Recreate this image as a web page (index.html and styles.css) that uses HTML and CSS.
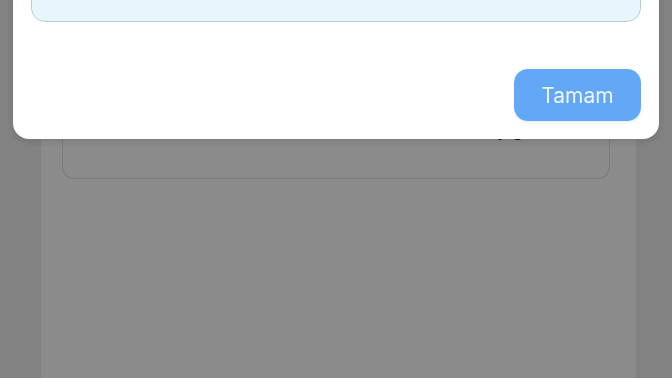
FILE: index.html
```html
<!DOCTYPE html>
<html lang="tr">
<head>
    <meta charset="UTF-8">
    <meta name="viewport" content="width=device-width, initial-scale=1.0">
    <title>Tamam</title>
    <link rel="stylesheet" href="styles.css">
</head>
<body>
    <div class="page">
        <div class="card">
            <div class="card-note">(Saygı)</div>
        </div>
    </div>

    <div class="modal">
        <div class="modal-field"></div>
        <div class="modal-footer">
            <button class="btn">Tamam</button>
        </div>
    </div>
</body>
</html>
```

FILE: styles.css
```css
body { margin: 0; background: #828282; font-family: Inter, "Noto Sans", sans-serif; height: 100vh; overflow: hidden; }
.page { margin: 0 36px 0 41px; height: 100vh; background: #8b8b8b; padding: 0 26px 0 21px; }
.card { height: 179px; border: 1px solid #7b7b7b; border-top: none; border-radius: 0 0 12px 12px; display: flex; align-items: flex-end; justify-content: flex-end; padding: 0 60px 38px 0; box-sizing: border-box; }
.card-note { font-size: 18px; color: #111; letter-spacing: 5px; }
.modal { position: fixed; left: 13px; right: 13px; top: -30px; background: white; border-radius: 0 0 16px 16px; padding: 0 18px 18px; box-shadow: 0 2px 6px rgba(0,0,0,0.12); }
.modal-field { height: 50px; background: #e8f5fd; border: 1px solid #a9d3ea; border-radius: 0 0 14px 14px; }
.modal-footer { display: flex; justify-content: flex-end; margin-top: 47px; }
.btn { background: #62a8f6; color: #eef5fe; border: none; width: 127px; height: 52px; border-radius: 14px; font-family: Inter, "Noto Sans", sans-serif; font-size: 21px; cursor: pointer; box-shadow: 0 2px 3px rgba(98,168,246,0.15); }
```
